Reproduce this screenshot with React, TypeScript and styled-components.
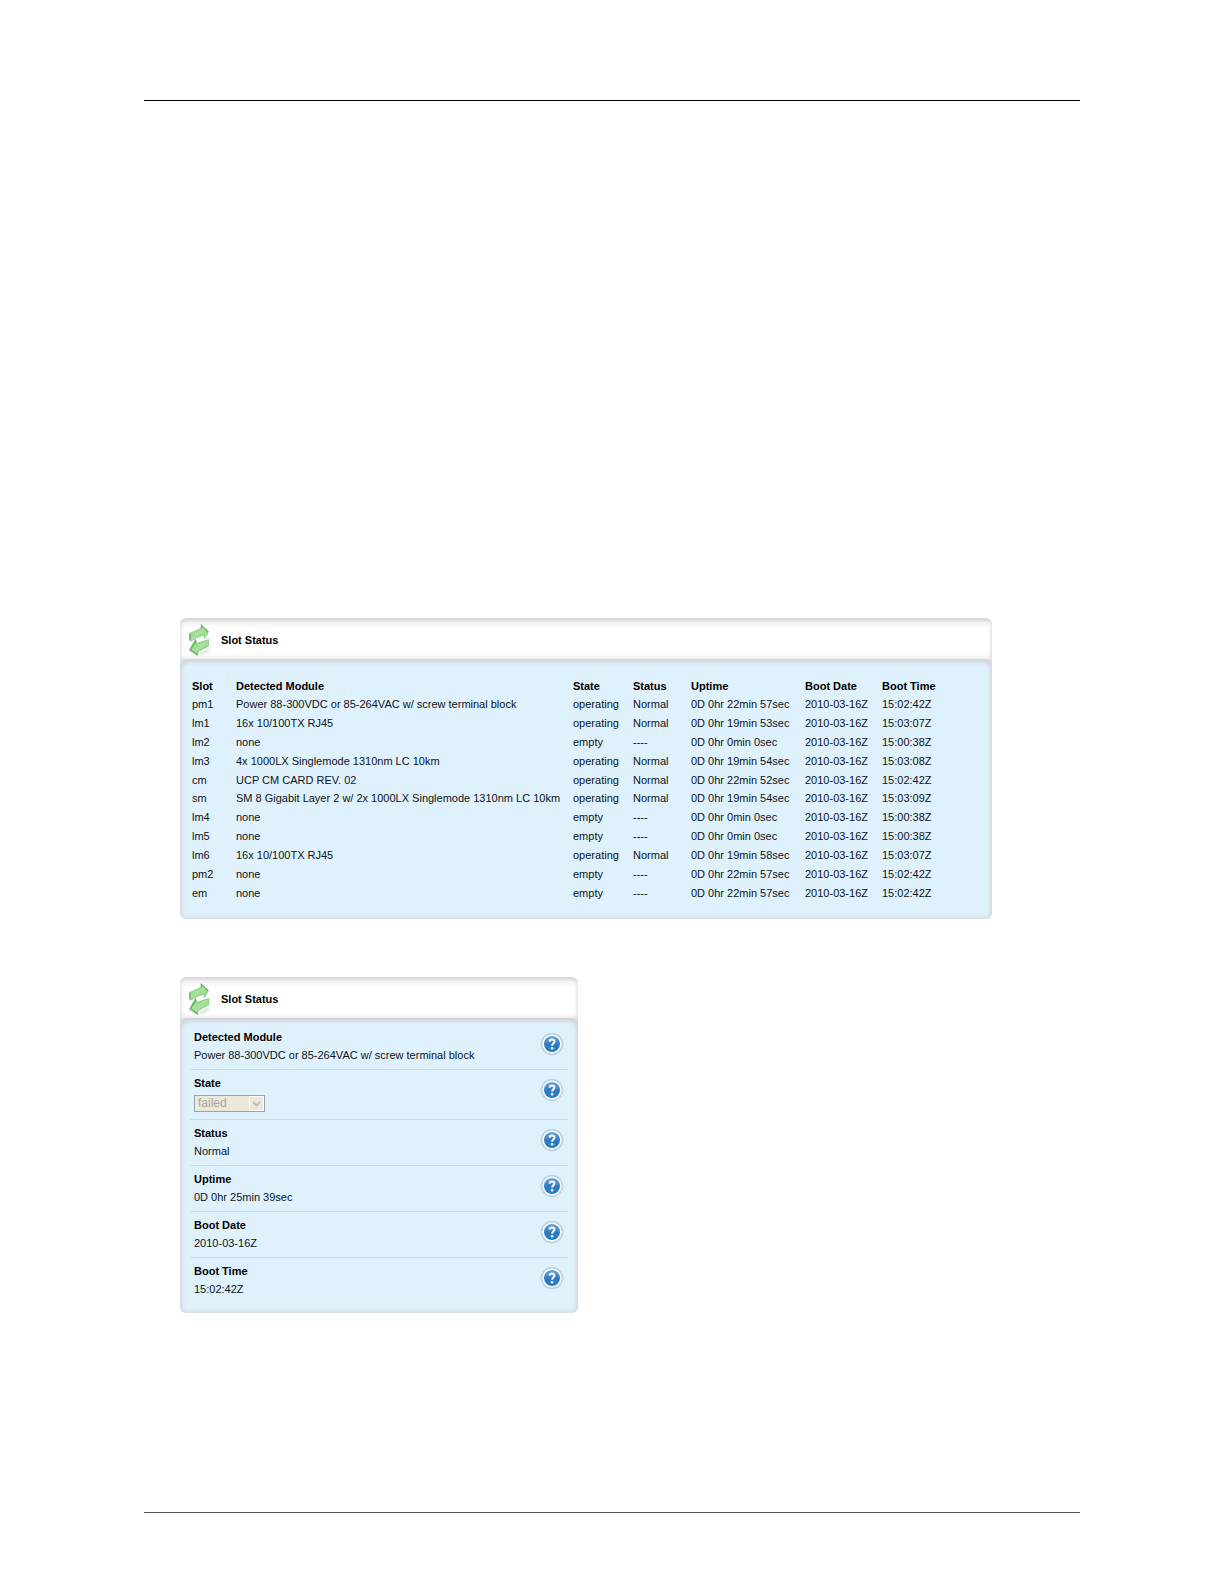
import React from "react";
import styled, { createGlobalStyle } from "styled-components";

const GlobalStyle = createGlobalStyle`
  * { box-sizing: border-box; }
  body {
    margin: 0;
    background: #fff;
    color: #0b1420;
    font-family: "Liberation Sans", Arial, sans-serif;
    font-size: 11px;
    line-height: 18px;
  }
`;

const Page = styled.div`
  display: flex;
  flex-direction: column;
  min-height: 100vh;
  padding: 100px 144px 71px;
`;

const Rule = styled.hr<{ $color: string }>`
  width: 100%;
  height: 1px;
  margin: 0;
  border: 0;
  background: ${(p) => p.$color};
`;

const Main = styled.main`
  display: flex;
  flex: 1;
  flex-direction: column;
  gap: 58px;
  padding: 517px 36px 0;
`;

const Panel = styled.section<{ $width: number }>`
  width: 100%;
  max-width: ${(p) => p.$width}px;
  overflow: hidden;
  border-radius: 6px;
  background: #dcdfe1;
`;

const PanelHeader = styled.header`
  display: flex;
  align-items: center;
  gap: 11px;
  height: 41px;
  padding: 2px 9px 0;
  border-radius: 6px 6px 0 0;
  background: #fff;
  box-shadow: inset 0 3px 3px #d8d8d8, inset 0 8px 3px #f6f6f6, inset 0 0 4px 1px #e2e2e2;
`;

const Title = styled.h2`
  margin: 0;
  font-size: 11px;
  line-height: 18px;
  color: #000;
`;

const PanelBody = styled.div<{ $padding: string }>`
  padding: ${(p) => p.$padding};
  border-radius: 8px 8px 6px 6px;
  background: #e0f1fe;
  box-shadow: inset 0 3px 4px #d0d4d8, inset 0 0 4px 2px #d8dee3;
`;

const Table = styled.table`
  width: 100%;
  height: 225px;
  border-collapse: collapse;
  table-layout: fixed;
`;

const Column = styled.col<{ $width?: number }>`
  width: ${(p) => (p.$width ? `${p.$width}px` : "auto")};
`;

const HeadCell = styled.th`
  padding: 0;
  color: #000;
  text-align: left;
  white-space: nowrap;
`;

const Cell = styled.td`
  padding: 0;
  white-space: nowrap;
`;

const Field = styled.div`
  display: flex;
  align-items: flex-start;
  justify-content: space-between;
  padding: 4px 4px 5px;
  border-bottom: 1px solid #cddde8;

  &:last-child {
    border-bottom: 0;
  }
`;

const FieldText = styled.div`
  display: flex;
  flex-direction: column;
  align-items: flex-start;
`;

const Label = styled.label`
  color: #000;
  font-weight: bold;
`;

const Value = styled.output`
  display: block;
`;

const SelectBox = styled.div`
  position: relative;
  margin: 3px 0 2px;
  height: 17px;
`;

const Select = styled.select`
  display: block;
  width: 71px;
  height: 17px;
  padding: 0 18px 0 3px;
  appearance: none;
  border: 1px solid #8fa5b8;
  border-radius: 0;
  background: #ece9dc;
  color: #a8a597;
  font: 12px/15px "Liberation Sans", Arial, sans-serif;
  opacity: 1;
`;

const SelectArrow = styled.svg`
  position: absolute;
  top: 1px;
  right: 1px;
  width: 15px;
  height: 15px;
  pointer-events: none;
`;

const HelpButton = styled.button`
  width: 24px;
  height: 24px;
  margin-top: 4px;
  padding: 0;
  border: 0;
  background: none;
  cursor: pointer;

  svg {
    display: block;
  }
`;

const ArrowsIcon = () => (
  <svg width="21" height="34" viewBox="0 0 21 34" aria-hidden="true">
    <defs>
      <linearGradient id="leaf" x1="0" y1="0" x2="1" y2="1">
        <stop offset="0" stopColor="#82cf7a" />
        <stop offset="0.5" stopColor="#a9e19d" />
        <stop offset="1" stopColor="#84d07b" />
      </linearGradient>
      <filter id="ground" x="-30%" y="-60%" width="160%" height="220%">
        <feGaussianBlur stdDeviation="1.2" />
      </filter>
    </defs>
    <path d="M9 30 L20 25 L20 29 L12 32Z" fill="#e2e2e2" filter="url(#ground)" />
    <path d="M0.5 10.5 L12 5.5 L12 1.5 L19.5 8.5 L15.5 15.5 L15 12 L8 14.5 L2 18 L0.5 17Z" fill="url(#leaf)" stroke="#78c271" strokeWidth="0.7" />
    <path d="M0.5 10.5 L1.6 11 L2 18 L0.5 17Z" fill="#6bb365" />
    <path d="M12 1.5 L19.5 8.5 L18.5 9.5 L13 3.5 L13 6 L12 5.5Z" fill="#6bb965" />
    <path d="M19.5 16.5 L19.5 23 L9 28.5 L8.5 32.5 L0.5 27 L6.5 16.5 L8 20.5Z" fill="url(#leaf)" stroke="#78c271" strokeWidth="0.7" />
    <path d="M6.5 16.5 L0.5 27 L8.5 32.5 L8.6 31 L2 26.5 L7.4 18.8Z" fill="#64b35e" />
  </svg>
);

const HelpIcon = () => (
  <svg width="24" height="24" viewBox="0 0 24 24" aria-hidden="true">
    <defs>
      <radialGradient id="halo">
        <stop offset="0.78" stopColor="#8799a6" stopOpacity="0.75" />
        <stop offset="1" stopColor="#9fb2c0" stopOpacity="0" />
      </radialGradient>
      <linearGradient id="orb" x1="0" y1="0" x2="0" y2="1">
        <stop offset="0" stopColor="#6fa9dc" />
        <stop offset="0.5" stopColor="#3479c0" />
        <stop offset="1" stopColor="#1680c8" />
      </linearGradient>
    </defs>
    <circle cx="12" cy="12" r="12" fill="url(#halo)" />
    <circle cx="12" cy="12" r="9.8" fill="#fff" />
    <circle cx="12" cy="12" r="8" fill="url(#orb)" />
    <path d="M9.6 9.6 C9.7 6.9 14.6 6.9 14.5 9.6 C14.5 11.2 12.2 11.2 12.1 13.6" fill="none" stroke="#fff" strokeWidth="2" />
    <circle cx="12.1" cy="16.3" r="1.3" fill="#fff" />
  </svg>
);

const columns: { name: string; width?: number }[] = [
  { name: "Slot", width: 44 },
  { name: "Detected Module", width: 337 },
  { name: "State", width: 60 },
  { name: "Status", width: 58 },
  { name: "Uptime", width: 114 },
  { name: "Boot Date", width: 77 },
  { name: "Boot Time" },
];

const slots = [
  ["pm1", "Power 88-300VDC or 85-264VAC w/ screw terminal block", "operating", "Normal", "0D 0hr 22min 57sec", "2010-03-16Z", "15:02:42Z"],
  ["lm1", "16x 10/100TX RJ45", "operating", "Normal", "0D 0hr 19min 53sec", "2010-03-16Z", "15:03:07Z"],
  ["lm2", "none", "empty", "----", "0D 0hr 0min 0sec", "2010-03-16Z", "15:00:38Z"],
  ["lm3", "4x 1000LX Singlemode 1310nm LC 10km", "operating", "Normal", "0D 0hr 19min 54sec", "2010-03-16Z", "15:03:08Z"],
  ["cm", "UCP CM CARD REV. 02", "operating", "Normal", "0D 0hr 22min 52sec", "2010-03-16Z", "15:02:42Z"],
  ["sm", "SM 8 Gigabit Layer 2 w/ 2x 1000LX Singlemode 1310nm LC 10km", "operating", "Normal", "0D 0hr 19min 54sec", "2010-03-16Z", "15:03:09Z"],
  ["lm4", "none", "empty", "----", "0D 0hr 0min 0sec", "2010-03-16Z", "15:00:38Z"],
  ["lm5", "none", "empty", "----", "0D 0hr 0min 0sec", "2010-03-16Z", "15:00:38Z"],
  ["lm6", "16x 10/100TX RJ45", "operating", "Normal", "0D 0hr 19min 58sec", "2010-03-16Z", "15:03:07Z"],
  ["pm2", "none", "empty", "----", "0D 0hr 22min 57sec", "2010-03-16Z", "15:02:42Z"],
  ["em", "none", "empty", "----", "0D 0hr 22min 57sec", "2010-03-16Z", "15:02:42Z"],
];

const fields = [
  { id: "module", label: "Detected Module", value: "Power 88-300VDC or 85-264VAC w/ screw terminal block" },
  { id: "state", label: "State", value: "failed", select: true },
  { id: "status", label: "Status", value: "Normal" },
  { id: "uptime", label: "Uptime", value: "0D 0hr 25min 39sec" },
  { id: "boot-date", label: "Boot Date", value: "2010-03-16Z" },
  { id: "boot-time", label: "Boot Time", value: "15:02:42Z" },
];

const SlotHeader = () => (
  <PanelHeader>
    <ArrowsIcon />
    <Title>Slot Status</Title>
  </PanelHeader>
);

export default function App() {
  return (
    <>
      <GlobalStyle />
      <Page>
        <Rule $color="#000" />
        <Main>
          <Panel $width={812}>
            <SlotHeader />
            <PanelBody $padding="18px 12px 17px">
              <Table>
                <colgroup>
                  {columns.map((c) => (
                    <Column key={c.name} $width={c.width} />
                  ))}
                </colgroup>
                <thead>
                  <tr>
                    {columns.map((c) => (
                      <HeadCell key={c.name} scope="col">{c.name}</HeadCell>
                    ))}
                  </tr>
                </thead>
                <tbody>
                  {slots.map((row) => (
                    <tr key={row[0]}>
                      {row.map((text, i) => (
                        <Cell key={i}>{text}</Cell>
                      ))}
                    </tr>
                  ))}
                </tbody>
              </Table>
            </PanelBody>
          </Panel>
          <Panel $width={398}>
            <SlotHeader />
            <PanelBody $padding="6px 10px 10px">
              {fields.map((f) => (
                <Field key={f.id}>
                  <FieldText>
                    <Label htmlFor={f.id}>{f.label}</Label>
                    {f.select ? (
                      <SelectBox>
                        <Select id={f.id} disabled defaultValue={f.value}>
                          <option>{f.value}</option>
                        </Select>
                        <SelectArrow viewBox="0 0 15 15" aria-hidden="true">
                          <rect width="15" height="15" fill="#fff" />
                          <rect x="1" y="1" width="13" height="13" fill="#ece9dc" />
                          <path d="M4 6 L7.5 9.5 L11 6" fill="none" stroke="#c3c0b0" strokeWidth="2" />
                        </SelectArrow>
                      </SelectBox>
                    ) : (
                      <Value id={f.id}>{f.value}</Value>
                    )}
                  </FieldText>
                  <HelpButton type="button" aria-label={`Help: ${f.label}`}>
                    <HelpIcon />
                  </HelpButton>
                </Field>
              ))}
            </PanelBody>
          </Panel>
        </Main>
        <Rule $color="#555" />
      </Page>
    </>
  );
}
